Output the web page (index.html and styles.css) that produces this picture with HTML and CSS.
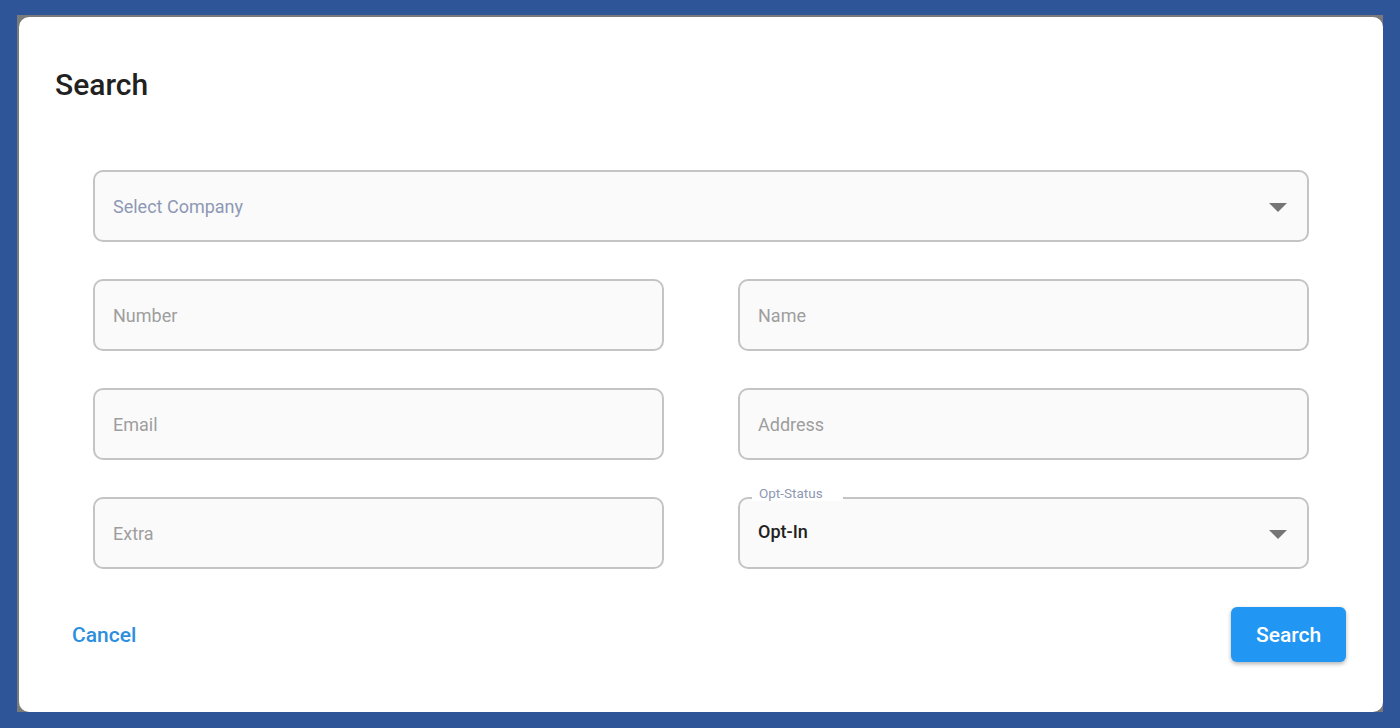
FILE: index.html
```html
<!DOCTYPE html>
<html lang="en">

<head>
    <meta charset="UTF-8">
    <meta name="viewport" content="width=device-width, initial-scale=1.0">
    <title>Search</title>
    <link rel="stylesheet" href="styles.css">
</head>

<body>
    <div class="frame">
        <div class="dialog">
            <h1 class="dialog-title">Search</h1>

            <form class="search-form">
                <div class="field select-field wide">
                    <span class="select-placeholder">Select Company</span>
                    <svg class="arrow" width="18" height="9" viewBox="0 0 18 9"><path d="M0 0h18L9 9z" fill="#757575"/></svg>
                </div>

                <div class="field"><input type="text" placeholder="Number"></div>
                <div class="field"><input type="text" placeholder="Name"></div>

                <div class="field"><input type="text" placeholder="Email"></div>
                <div class="field"><input type="text" placeholder="Address"></div>

                <div class="field"><input type="text" placeholder="Extra"></div>
                <div class="field select-field">
                    <span class="float-label">Opt-Status</span>
                    <span class="select-value">Opt-In</span>
                    <svg class="arrow" width="18" height="9" viewBox="0 0 18 9"><path d="M0 0h18L9 9z" fill="#757575"/></svg>
                </div>
            </form>

            <div class="dialog-actions">
                <button type="button" class="btn-text">Cancel</button>
                <button type="button" class="btn-primary">Search</button>
            </div>
        </div>
    </div>
</body>

</html>
```

FILE: styles.css
```css
* {
    margin: 0;
    padding: 0;
    box-sizing: border-box;
}

body {
    font-family: Roboto, "Liberation Sans", sans-serif;
    background-color: #2e5597;
    height: 100vh;
    padding: 15px 17px 16px 17px;
    overflow: hidden;
}

.frame {
    background-color: #7a7a7a;
    height: 100%;
    padding: 2px 0 0 2px;
}

.dialog {
    background-color: #fff;
    height: 100%;
    border-radius: 10px;
    padding-top: 51px;
}

.dialog-title {
    font-size: 30px;
    font-weight: 500;
    line-height: 33px;
    color: #212121;
    padding-left: 36px;
}

.search-form {
    margin: 69px 74px 0 74px;
    display: grid;
    grid-template-columns: 1fr 1fr;
    column-gap: 74px;
    row-gap: 37px;
}

.field {
    position: relative;
    height: 72px;
    border: 2px solid #c4c4c4;
    border-radius: 10px;
    background-color: #fafafa;
    display: flex;
    align-items: center;
}

.wide {
    grid-column: 1 / 3;
}

.field input {
    width: 100%;
    height: 100%;
    border: none;
    outline: none;
    background: transparent;
    padding: 0 18px;
    font-family: Roboto, "Liberation Sans", sans-serif;
    font-size: 18px;
    color: #212121;
    border-radius: 10px;
}

.field input::placeholder {
    color: #9e9e9e;
}

.select-field {
    padding: 0 20px 0 18px;
    justify-content: space-between;
}

.select-placeholder {
    font-size: 18px;
    color: #8e98b4;
}

.select-value {
    font-size: 18px;
    font-weight: 500;
    color: #212121;
    margin-top: -3px;
}

.arrow {
    margin-top: 2px;
}

.float-label {
    position: absolute;
    top: -13px;
    left: 12px;
    height: 15px;
    padding: 0 20px 0 7px;
    background-color: #fff;
    font-size: 13.5px;
    line-height: 14px;
    color: #8e98b4;
}

.dialog-actions {
    display: flex;
    justify-content: space-between;
    align-items: center;
    margin-top: 38px;
    padding: 0 37px 0 53px;
}

.btn-text {
    background: none;
    border: none;
    padding: 8px 0;
    font-family: Roboto, "Liberation Sans", sans-serif;
    font-size: 21px;
    font-weight: 500;
    color: #2d8fdd;
    cursor: pointer;
}

.btn-primary {
    width: 115px;
    height: 55px;
    background-color: #2196f3;
    color: #fff;
    border: none;
    border-radius: 6px;
    font-family: Roboto, "Liberation Sans", sans-serif;
    font-size: 21px;
    font-weight: 500;
    cursor: pointer;
    box-shadow: 0 2px 4px rgba(0, 0, 0, 0.3);
}
```
